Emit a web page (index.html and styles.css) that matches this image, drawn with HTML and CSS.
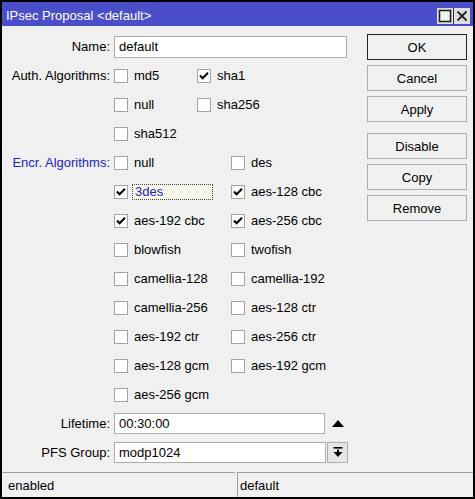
FILE: index.html
```html
<!DOCTYPE html>
<html>
<head>
<meta charset="utf-8">
<title>IPsec Proposal</title>
<link rel="stylesheet" href="styles.css">
</head>
<body>
<div class="window">
  <div class="titlebar">
    <span class="title">IPsec Proposal &lt;default&gt;</span>
    <div class="tb-btns">
      <span class="tb-btn"><svg width="16" height="16" viewBox="0 0 16 16"><rect x="2.5" y="2.5" width="11" height="11" fill="#f4f4f4" stroke="#222" stroke-width="1.6"/></svg></span>
      <span class="tb-btn"><svg width="16" height="16" viewBox="0 0 16 16"><path d="M3.5 3.5 L12.5 12.5 M12.5 3.5 L3.5 12.5" stroke="#222" stroke-width="1.8" fill="none"/></svg></span>
    </div>
  </div>
  <div class="content">
    <div class="form">
      <div class="row">
        <div class="lbl">Name:</div>
        <div class="field"><div class="input name-input">default</div></div>
      </div>
      <div class="group">
        <div class="lbl">Auth. Algorithms:</div>
        <div class="checks auth">
          <div class="chk"><span class="box"></span><span class="txt">md5</span></div>
          <div class="chk"><span class="box"><svg width="12" height="12" viewBox="0 0 12 12"><path d="M2 5.5 L4.6 8.3 L10 2.8" stroke="#000" stroke-width="2" fill="none"/></svg></span><span class="txt">sha1</span></div>
          <div class="chk"><span class="box"></span><span class="txt">null</span></div>
          <div class="chk"><span class="box"></span><span class="txt">sha256</span></div>
          <div class="chk"><span class="box"></span><span class="txt">sha512</span></div>
        </div>
      </div>
      <div class="group">
        <div class="lbl blue">Encr. Algorithms:</div>
        <div class="checks encr">
          <div class="chk"><span class="box"></span><span class="txt">null</span></div>
          <div class="chk"><span class="box"></span><span class="txt">des</span></div>
          <div class="chk"><span class="box"><svg width="12" height="12" viewBox="0 0 12 12"><path d="M2 5.5 L4.6 8.3 L10 2.8" stroke="#000" stroke-width="2" fill="none"/></svg></span><span class="txt focus">3des</span></div>
          <div class="chk"><span class="box"><svg width="12" height="12" viewBox="0 0 12 12"><path d="M2 5.5 L4.6 8.3 L10 2.8" stroke="#000" stroke-width="2" fill="none"/></svg></span><span class="txt">aes-128 cbc</span></div>
          <div class="chk"><span class="box"><svg width="12" height="12" viewBox="0 0 12 12"><path d="M2 5.5 L4.6 8.3 L10 2.8" stroke="#000" stroke-width="2" fill="none"/></svg></span><span class="txt">aes-192 cbc</span></div>
          <div class="chk"><span class="box"><svg width="12" height="12" viewBox="0 0 12 12"><path d="M2 5.5 L4.6 8.3 L10 2.8" stroke="#000" stroke-width="2" fill="none"/></svg></span><span class="txt">aes-256 cbc</span></div>
          <div class="chk"><span class="box"></span><span class="txt">blowfish</span></div>
          <div class="chk"><span class="box"></span><span class="txt">twofish</span></div>
          <div class="chk"><span class="box"></span><span class="txt">camellia-128</span></div>
          <div class="chk"><span class="box"></span><span class="txt">camellia-192</span></div>
          <div class="chk"><span class="box"></span><span class="txt">camellia-256</span></div>
          <div class="chk"><span class="box"></span><span class="txt">aes-128 ctr</span></div>
          <div class="chk"><span class="box"></span><span class="txt">aes-192 ctr</span></div>
          <div class="chk"><span class="box"></span><span class="txt">aes-256 ctr</span></div>
          <div class="chk"><span class="box"></span><span class="txt">aes-128 gcm</span></div>
          <div class="chk"><span class="box"></span><span class="txt">aes-192 gcm</span></div>
          <div class="chk"><span class="box"></span><span class="txt">aes-256 gcm</span></div>
        </div>
      </div>
      <div class="row">
        <div class="lbl">Lifetime:</div>
        <div class="field"><div class="input life-input">00:30:00</div><span class="up-tri"></span></div>
      </div>
      <div class="row">
        <div class="lbl">PFS Group:</div>
        <div class="field"><div class="input pfs-input">modp1024</div><span class="drop-btn"><svg width="10" height="11" viewBox="0 0 10 11"><rect x="0.5" y="0" width="9" height="1.6" fill="#000"/><rect x="4" y="2.6" width="2" height="3" fill="#000"/><path d="M0.5 5 L9.5 5 L5 10 Z" fill="#000"/></svg></span></div>
      </div>
    </div>
    <div class="buttons">
      <div class="btn default">OK</div>
      <div class="btn">Cancel</div>
      <div class="btn">Apply</div>
      <div class="btn sep">Disable</div>
      <div class="btn">Copy</div>
      <div class="btn">Remove</div>
    </div>
  </div>
  <div class="statusbar">
    <div class="panel p1">enabled</div>
    <div class="panel p2">default</div>
  </div>
</div>
</body>
</html>
```

FILE: styles.css
```css
html, body {
  margin: 0;
  padding: 0;
  background: #f0f0f0;
}

body {
  font-family: "Liberation Sans", Arial, sans-serif;
  font-size: 13px;
  color: #000;
}

.window {
  box-sizing: border-box;
  width: 475px;
  height: 499px;
  border: 2px solid #000;
  background: #f0f0f0;
  display: flex;
  flex-direction: column;
}

.titlebar {
  height: 24px;
  background: #4a4ec8;
  color: #fff;
  display: flex;
  align-items: center;
  padding-left: 4px;
  padding-top: 2px;
  box-sizing: border-box;
  flex-shrink: 0;
}

.title {
  flex: 1;
}

.tb-btns {
  display: flex;
  gap: 1px;
  margin-right: 3px;
  align-self: flex-end;
  margin-bottom: 2px;
  background: #333;
}

.tb-btn {
  width: 16px;
  height: 16px;
  background: #dedede;
  display: block;
}

.tb-btn svg {
  display: block;
}

.content {
  flex: 1;
  display: flex;
  padding-top: 6px;
}

.form {
  display: flex;
  flex-direction: column;
}

.row {
  display: flex;
  align-items: center;
  height: 29px;
}

.group {
  display: flex;
  align-items: flex-start;
}

.lbl {
  width: 108px;
  flex-shrink: 0;
  text-align: right;
  white-space: nowrap;
}

.group .lbl {
  height: 29px;
  line-height: 29px;
}

.lbl.blue {
  color: #2323c4;
}

.field {
  margin-left: 4px;
  display: flex;
  align-items: center;
}

.input {
  box-sizing: border-box;
  background: #fff;
  border: 1px solid #acacac;
  padding-left: 4px;
  display: flex;
  align-items: center;
}

.name-input {
  width: 233px;
  height: 22px;
}

.life-input {
  width: 211px;
  height: 21px;
}

.pfs-input {
  width: 212px;
  height: 21px;
}

.up-tri {
  width: 0;
  height: 0;
  border-left: 6px solid transparent;
  border-right: 6px solid transparent;
  border-bottom: 7px solid #000;
  margin-left: 7px;
}

.drop-btn {
  box-sizing: border-box;
  width: 21px;
  height: 21px;
  margin-left: 1px;
  border: 1px solid #acacac;
  background: #e6e6e6;
  display: flex;
  align-items: center;
  justify-content: center;
}

.drop-btn svg {
  display: block;
}

.checks {
  display: grid;
  grid-auto-rows: 29px;
  margin-left: 4px;
}

.checks.auth {
  grid-template-columns: 83px 83px;
}

.checks.encr {
  grid-template-columns: 117px 117px;
}

.chk {
  display: flex;
  align-items: center;
  white-space: nowrap;
}

.box {
  box-sizing: border-box;
  width: 14px;
  height: 14px;
  border: 1px solid #a3a3a3;
  background: #fff;
  display: flex;
  align-items: center;
  justify-content: center;
  flex-shrink: 0;
}

.box svg {
  display: block;
}

.txt {
  margin-left: 6px;
}

.txt.focus {
  box-sizing: border-box;
  margin-left: 4px;
  width: 81px;
  height: 16px;
  border: 1px dotted #444;
  background: #f7f7ea;
  padding-left: 2px;
  color: #2323c4;
  display: flex;
  align-items: center;
}

.buttons {
  margin-left: auto;
  margin-right: 6px;
  margin-top: 2px;
  display: flex;
  flex-direction: column;
  gap: 5px;
}

.btn {
  box-sizing: border-box;
  width: 100px;
  height: 26px;
  border: 1px solid #adadad;
  background: #f0f0f0;
  display: flex;
  align-items: center;
  justify-content: center;
}

.btn.default {
  border-color: #222;
}

.btn.sep {
  margin-top: 6px;
}

.statusbar {
  height: 25px;
  display: flex;
  flex-shrink: 0;
}

.panel {
  box-sizing: border-box;
  border-top: 1px solid #a0a0a0;
  display: flex;
  align-items: center;
}

.p1 {
  width: 233px;
  padding-left: 6px;
}

.p2 {
  flex: 1;
  margin-left: 2px;
  border-left: 1px solid #a0a0a0;
  padding-left: 2px;
}
```
